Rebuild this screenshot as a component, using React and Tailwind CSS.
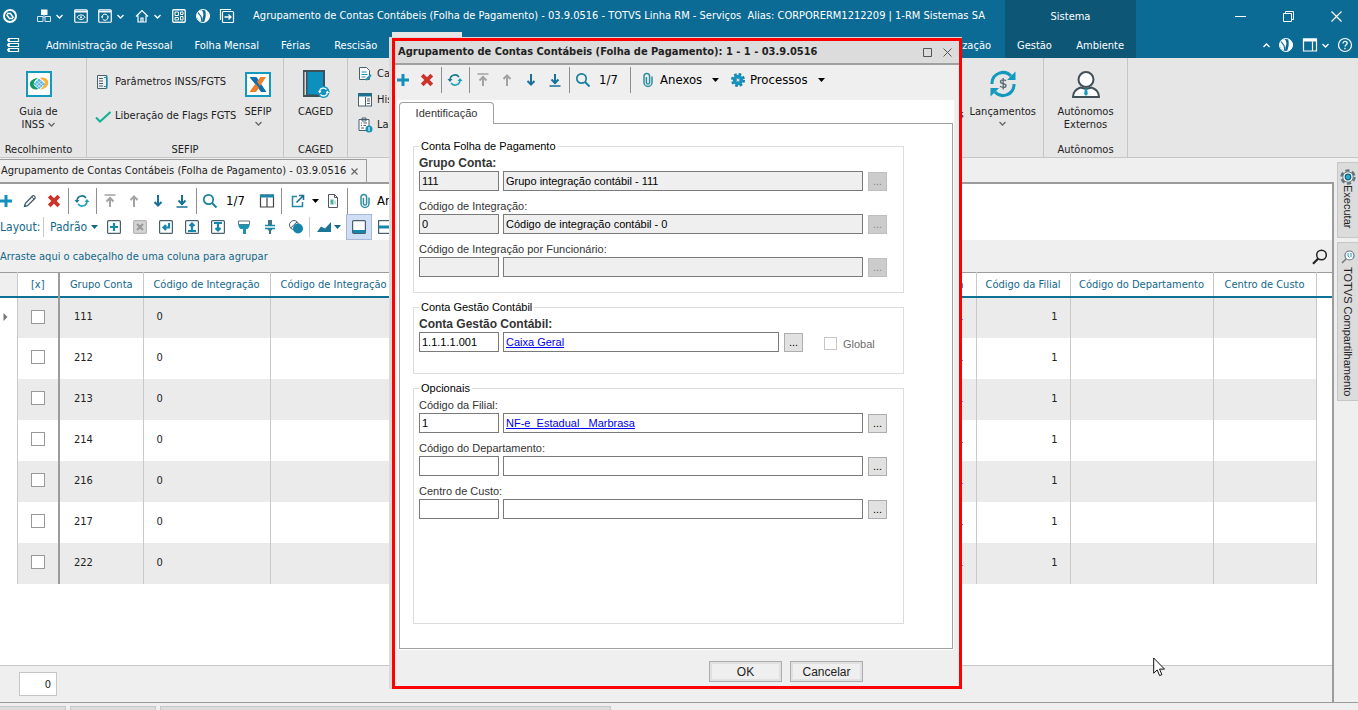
import { useState } from "react";

const TAHOMA = "font-['DejaVu_Sans_Condensed','DejaVu_Sans',sans-serif]";
const ARIAL = "font-['Liberation_Sans',Arial,sans-serif]";

// ---------- icons ----------
const Svg = ({ size = 16, children, className = "" }) => (
  <svg width={size} height={size} viewBox="0 0 16 16" fill="none" className={`shrink-0 ${className}`} aria-hidden="true">
    {children}
  </svg>
);

const Chevron = ({ up = false }) => (
  <svg width="7" height="5" viewBox="0 0 7 5" fill="none" className="shrink-0" aria-hidden="true">
    <path d={up ? "M.5 4 3.5 1l3 3" : "M.5 1l3 3 3-3"} stroke="currentColor" strokeWidth="1.3" />
  </svg>
);

const Caret = () => (
  <svg width="7" height="4" viewBox="0 0 7 4" className="shrink-0" aria-hidden="true">
    <path d="M0 0h7L3.500 4z" fill="currentColor" />
  </svg>
);

const TotvsIcon = () => (
  <Svg>
    <circle cx="8" cy="8" r="6" stroke="#fff" strokeWidth="2" />
    <path d="M5 5.500h3.500l3 4.500M4.500 6.500l3 4h3.500" stroke="#fff" strokeWidth="1.500" />
  </Svg>
);

const BoxesIcon = () => (
  <Svg>
    <path d="M5 1.500h6.500V7H5z" fill="#fff" />
    <path d="M1.500 8.500H7v5H1.500zM9 8.500h5.500v5H9zM8 6v4" stroke="#d6e6ee" />
  </Svg>
);

const WindowFrame = ({ children }) => (
  <Svg>
    <rect x="1.750" y="1.750" width="12.500" height="12.500" rx="1" stroke="#fff" strokeWidth="1.200" />
    <path d="M2 3.500h12" stroke="#fff" strokeWidth="2" />
    {children}
  </Svg>
);

const HomeIcon = () => (
  <Svg>
    <path d="M2 8.500 8 2.500l6 6M4 7.500V14h8V7.500M7 14v-4h2v4" stroke="#fff" strokeWidth="1.200" />
  </Svg>
);

const GridIcon = () => (
  <Svg>
    <rect x="1.750" y="1.750" width="12.500" height="12.500" rx="1" stroke="#fff" strokeWidth="1.300" />
    <path d="M4 4h3.500v3.500H4zM9.500 4h2.500v2.500H9.500zM4 9.500h3.500V12H4zM9.500 8.500H12V12H9.500z" stroke="#fff" />
  </Svg>
);

const GlobeIcon = () => (
  <Svg>
    <circle cx="8" cy="8" r="6.500" stroke="#fff" />
    <path d="M2.500 4.500C4 2.500 6 2 7 2.500c1.500 2 2 4.500.5 7.500L7 14C2.500 13 .8 8 2.500 4.500z" fill="#fff" />
    <path d="M10 2c4 1 5.500 5 4 8.500-1 2.500-3 3.500-5 3.800 1.500-3.300 2.500-8.300 1-12.300z" fill="#fff" />
    <path d="M3 4.500 6 8.500 7 14" stroke="#0c6b94" strokeWidth="1.200" />
  </Svg>
);

const ExitIcon = () => (
  <Svg>
    <path d="M1.500 12V1.500H12" stroke="#fff" strokeWidth="1.200" />
    <rect x="3.500" y="3.500" width="11" height="11" rx="1" stroke="#fff" strokeWidth="1.200" />
    <path d="M5.500 9h6M9.500 6.500 12 9l-2.500 2.500" stroke="#fff" strokeWidth="1.300" />
  </Svg>
);

const MenuIcon = () => (
  <Svg>
    <path d="M3.500 1.500h10v3h-10zM3.500 6.500h10v3h-10zM3.500 11.500h10v3h-10z" stroke="#fff" strokeWidth="1.200" />
    <path d="M2 3h3M2 8h3M2 13h3" stroke="#fff" strokeWidth="1.500" />
  </Svg>
);

const PlusIcon = () => (
  <Svg><path d="M8 2v12M2 8h12" stroke="#1590bb" strokeWidth="3" /></Svg>
);

const PencilIcon = () => (
  <Svg>
    <path d="M2.500 13.500 3.300 10.500 10.500 3c1-1.200 3.500.8 2.500 2.300L5.500 12.700z" stroke="#3f5661" strokeWidth="1.200" />
    <path d="M9.800 4 12 6.200" stroke="#3f5661" />
    <path d="M2 14l.6-2.500L4.500 13.400z" fill="#17607f" />
  </Svg>
);

const DeleteIcon = () => (
  <Svg><path d="M3.200 3.200l9.600 9.600M12.800 3.200l-9.600 9.600" stroke="#cc3329" strokeWidth="3.800" /></Svg>
);

const RefreshIcon = () => (
  <Svg>
    <path d="M3 8a5 5 0 0 1 9-3" stroke="#17788f" strokeWidth="1.600" />
    <path d="M13 8a5 5 0 0 1-9 3" stroke="#1aa0bd" strokeWidth="1.600" />
    <path d="M.5 7h5L3 10z" fill="#17788f" />
    <path d="M10.500 9h5L13 6z" fill="#1aa0bd" />
  </Svg>
);

const ArrowIcon = ({ down = false, bar = false, color }) => (
  <Svg>
    <g transform={down ? "rotate(180 8 8)" : undefined} stroke={color} strokeWidth="2">
      <path d={bar ? "M8 4v10M4.500 8.500 8 5 11.500 8.500" : "M8 3v11M4.500 7 8 3.500 11.500 7"} />
      {bar && <path d="M2.500 2h11" strokeWidth="1.500" />}
    </g>
  </Svg>
);

const SearchIcon = () => (
  <Svg>
    <circle cx="6.500" cy="6.500" r="4.700" stroke="#17809f" strokeWidth="1.700" />
    <path d="m10 10 4.500 4.500" stroke="#17809f" strokeWidth="2" />
  </Svg>
);

const ColumnsIcon = () => (
  <Svg>
    <path d="M1.500 2h13v12h-13zM8 4.500V14" stroke="#444" strokeWidth="1.200" />
    <path d="M1 1.500h14v3H1z" fill="#1a86aa" />
  </Svg>
);

const ExportIcon = () => (
  <Svg>
    <path d="M7 3.500H2.500v10h10V9" stroke="#2189a3" strokeWidth="1.500" />
    <path d="M6.500 9.500 13 3M9 2.500h4.500V7" stroke="#1a6f92" strokeWidth="1.600" />
  </Svg>
);

const DocIcon = () => (
  <Svg>
    <path d="M3.500 1.500h6l3 3v10h-9z" stroke="#556" />
    <path d="M5.500 6.500h3v5h-3z" fill="#4fae9b" />
    <path d="M8.500 7.500H11v4H8.500z" fill="#bfe0d8" />
    <path d="M9.500 1.500v3h3" stroke="#556" />
  </Svg>
);

const ClipIcon = () => (
  <Svg>
    <path d="M12 4.500v6a4 4 0 0 1-8 0V4.300a2.800 2.800 0 0 1 5.600 0v6.200a1.600 1.600 0 0 1-3.200 0V5" stroke="#2f8fa0" strokeWidth="1.500" />
  </Svg>
);

const GearIcon = () => (
  <Svg>
    <circle cx="8" cy="8" r="5.800" stroke="#1780a8" strokeWidth="2.400" strokeDasharray="2.600 1.950" />
    <circle cx="8" cy="8" r="3.600" stroke="#1193c4" strokeWidth="3.200" />
    <circle cx="8" cy="8" r="1.600" fill="#eaf4f8" stroke="#11607f" strokeWidth=".6" />
  </Svg>
);

const FrameIcon = ({ d, off = false }) => (
  <Svg>
    <rect x="1.600" y="1.600" width="12.800" height="12.800" rx="1" fill={off ? "#d5d5d5" : "#fff"} stroke={off ? "#b5b5b5" : "#49606c"} strokeWidth="1.200" />
    <path d={d} stroke={off ? "#999" : "#1487ac"} strokeWidth="2.200" />
  </Svg>
);

const PaintIcon = () => (
  <Svg>
    <path d="M2.500 2h11v3.500h-11z" fill="none" stroke="#62767e" />
    <path d="M2.500 5.500h11v2l-2 2.500H10v5H7v-5H4.500l-2-2.500z" fill="#1b93b5" />
  </Svg>
);

const PinIcon = () => (
  <Svg>
    <path d="M6 1h4v5H6zM5.500 10h5L9 12v3H7v-3z" fill="#3f7484" />
    <path d="M3 6.500h10M3 9.500h10" stroke="#1487ac" strokeWidth="1.400" />
  </Svg>
);

const CirclesIcon = () => (
  <Svg>
    <circle cx="6" cy="6" r="4.500" stroke="#49606c" />
    <circle cx="10" cy="9.500" r="5" fill="#1584a8" />
    <path d="M2.500 9 9 3" stroke="#49606c" />
  </Svg>
);

const ChartIcon = () => (
  <Svg><path d="M1 13 5 7.500l4 2L15 3v10z" fill="#1a7696" /></Svg>
);

const PanelIcon = () => (
  <Svg>
    <rect x="1.600" y="1.600" width="12.800" height="12.800" rx="1" fill="#fff" stroke="#49606c" strokeWidth="1.200" />
    <path d="M2 11h12v3H2z" fill="#1487ac" />
  </Svg>
);

const SplitIcon = () => (
  <Svg>
    <rect x="1.600" y="1.600" width="12.800" height="12.800" stroke="#49606c" strokeWidth="1.200" />
    <path d="M2 6.500h12v3H2z" fill="#1487ac" />
  </Svg>
);

const ListDocIcon = () => (
  <Svg>
    <path d="M2.500 1.500h9v13h-9z" fill="#eee" stroke="#49606c" />
    <path d="M4 4.500h4M4 7h4M4 9.500h4M4 12h4" stroke="#49606c" />
    <path d="M9 3.500h3v9H9M12 1.500v13" stroke="#1b93b5" />
  </Svg>
);

const CheckIcon = () => (
  <Svg><path d="M1 9.500 5 13.500l10.500-9.500" stroke="#13b295" strokeWidth="2" /></Svg>
);

const NoteIcon = () => (
  <Svg>
    <path d="M2.500 1.500h7l3 3v9h-10z" fill="#fff" stroke="#49606c" />
    <path d="M4.500 6h5M4.500 8.500h6M4.500 11h4" stroke="#1b93b5" />
    <path d="M9 14l5-5" stroke="#1b93b5" strokeWidth="2" />
  </Svg>
);

const HistoryIcon = () => (
  <Svg>
    <rect x="1.500" y="1.500" width="13" height="12.500" fill="#fff" stroke="#49606c" />
    <path d="M1 1.500h14v3H1z" fill="#1b7390" />
    <path d="M8.500 5v9M10 7h3M10 9h3M10 11.500h3" stroke="#49606c" />
  </Svg>
);

const ClipboardIcon = () => (
  <Svg>
    <path d="M2 2.500h10v11H2z" fill="#fff" stroke="#49606c" />
    <path d="M5 1h4v3H5zM4 6h1M6.500 6H10M4 8.500h1M6.500 8.500H9M4 11h3" stroke="#49606c" />
    <circle cx="12" cy="12" r="3.500" fill="#1593bb" />
    <path d="M12 10v4" stroke="#fff" />
  </Svg>
);

const BigIcon = ({ children }) => (
  <svg width="28" height="28" viewBox="0 0 28 28" fill="none" aria-hidden="true">{children}</svg>
);

const GuiaIcon = () => (
  <BigIcon>
    <rect x="2" y="2" width="24" height="24" fill="#fff" stroke="#1199be" strokeWidth="2" />
    <path d="M13 8C7 8.500 3.500 12 5.500 16.500 7 19.500 11 20 13.500 19L9 15.500c-1-2.500 1-5.500 4-7.500z" fill="#0c9a67" />
    <path d="M15 19.500c6-.5 9.500-4.500 8-8.500-1.500-3.500-6-4-8-3l4.500 3.500c1 2.500-1.500 6-4.500 8z" fill="#f8b13c" />
    <path d="M14 8.500 20 14l-5.500 5L8.500 14z" fill="#5db5e0" />
    <path d="m12 10.500 6 5.500M10 12.500l6 5M16.500 10.500l-6 5.500M18.500 12.500l-6 5" stroke="#e8f4fa" strokeWidth=".7" />
  </BigIcon>
);

const SefipIcon = () => (
  <BigIcon>
    <rect x="2" y="3" width="24" height="23" fill="#fff" stroke="#1199be" strokeWidth="2" />
    <path d="M5.500 7h7L22.500 22H17l-4-5.500z" fill="#0f70ad" />
    <path d="M22 7h-5.500L13 11.500l3 4.500zM5.500 22H12l3-4-3.500-4.500z" fill="#ef7f29" />
  </BigIcon>
);

const CagedIcon = () => (
  <BigIcon>
    <path d="M1 0h22v27H1z" fill="#414f57" />
    <path d="M5.500 2H21v22.500H5.500z" fill="#0d8fc0" />
    <path d="M2.500 2H4v23H2.500z" fill="#dadada" />
    <circle cx="21.500" cy="22" r="6" fill="#1193bd" />
    <path d="M17.500 21.500a4 4 0 0 1 7-2M25.500 22.500a4 4 0 0 1-7 2" stroke="#fff" strokeWidth="1.300" />
    <path d="M16 21h3.500l-1.800 2.500zM23.700 23h3.500l-1.800-2.500z" fill="#fff" />
  </BigIcon>
);

const MoneyIcon = () => (
  <BigIcon>
    <path d="M3 14v-1.500A11 11 0 0 1 22 6" stroke="#1199be" strokeWidth="3" />
    <path d="M25 14v1.500A11 11 0 0 1 6 22" stroke="#1199be" strokeWidth="3" />
    <path d="M26.500 1.500V10H18zM1.500 26.500V18H10z" fill="#1199be" />
    <path d="M17 11c-1-1.500-5.500-1.500-5.500.7 0 2.800 5.500 1.300 5.500 4 0 2.200-4.500 2.300-6 .5M14.200 8v11.500" stroke="#5a6a72" strokeWidth="1.300" />
  </BigIcon>
);

const PersonIcon = () => (
  <BigIcon>
    <path d="M1 27c0-5 3-8 7.500-9.500L14 19l5.500-1.500C24 19 27 22 27 27z" fill="#fff" stroke="#414f57" strokeWidth="2" />
    <circle cx="14" cy="9.500" r="7.500" fill="#fff" stroke="#414f57" strokeWidth="2" />
    <path d="M13 18.500h2l.8 5.500L14 26l-1.800-2z" fill="#1199be" />
  </BigIcon>
);

// ---------- small pieces ----------
const Sep = () => (
  <span className="flex justify-center w-1 h-[26px] shrink-0">
    <span className="w-px bg-[#8f8f8f]" />
  </span>
);

const ToolButton = ({ label, children }) => (
  <button type="button" aria-label={label} className="flex items-center justify-center w-6 h-6 shrink-0">
    {children}
  </button>
);

const RecordNav = () => (
  <>
    <ToolButton label="Atualizar"><RefreshIcon /></ToolButton>
    <Sep />
    <ToolButton label="Primeiro"><ArrowIcon bar color="#a3a3a3" /></ToolButton>
    <ToolButton label="Anterior"><ArrowIcon color="#a3a3a3" /></ToolButton>
    <ToolButton label="Próximo"><ArrowIcon down color="#17729a" /></ToolButton>
    <ToolButton label="Último"><ArrowIcon down bar color="#17729a" /></ToolButton>
    <Sep />
    <ToolButton label="Pesquisar"><SearchIcon /></ToolButton>
    <span className="w-[33px] pl-1 text-[13px] text-black">1/7</span>
  </>
);

const LAYOUT_TOOLS = [
  { label: "Novo layout", icon: <FrameIcon d="M8 4v8M4 8h8" /> },
  { label: "Excluir layout", icon: <FrameIcon off d="M5 5l6 6M11 5l-6 6" /> },
  { label: "Restaurar layout", icon: <FrameIcon d="M11 4v4.500H6M8 6 5.500 8.500 8 11" /> },
  { label: "Exportar layout", icon: <FrameIcon d="M4 12h8M8 11V5M5.500 7 8 4.500 10.500 7" /> },
  { label: "Importar layout", icon: <FrameIcon d="M4 4h8M8 4v7M5.500 9 8 11.500 10.500 9" /> },
  { label: "Formatar", icon: <PaintIcon /> },
  { label: "Fixar", icon: <PinIcon /> },
  { label: "Comparar", icon: <CirclesIcon /> },
];

const ROWS = ["111", "212", "213", "214", "216", "217", "222"];

// ---------- top bar ----------
const Header = () => (
  <header className="flex h-[58px] shrink-0 bg-[#0c6b94] text-white text-[11px]">
    <div className="flex flex-col flex-1 min-w-0">
      <div className="flex items-center h-8">
        <div className="flex items-center shrink-0 w-[233px] pl-[2px]">
          <TotvsIcon />
          <span className="w-px h-[22px] ml-[10px] mr-2 bg-[#8db9cd]" />
          <button type="button" aria-label="Módulos" className="flex items-center gap-1"><BoxesIcon /><Chevron /></button>
          <button type="button" aria-label="Visualizar" className="ml-[10px]">
            <WindowFrame>
              <path d="M4 9.200c2-3 6-3 8 0-2 3-6 3-8 0z" stroke="#fff" /><circle cx="8" cy="9.200" r="1" fill="#fff" />
            </WindowFrame>
          </button>
          <button type="button" aria-label="Atualizar" className="flex items-center gap-1 ml-2">
            <WindowFrame>
              <path d="M5 9a3 3 0 0 1 5.500-1.500M11 9.500A3 3 0 0 1 5.500 11" stroke="#fff" />
              <path d="M4 8.500h2.500L5 10.500zM9.500 9.500H12L11 7.500z" fill="#fff" />
            </WindowFrame>
            <Chevron />
          </button>
          <button type="button" aria-label="Início" className="flex items-center gap-1 ml-[10px]"><HomeIcon /><Chevron /></button>
          <span className="flex gap-2 ml-[10px]">
            <GridIcon />
            <GlobeIcon />
            <ExitIcon />
          </span>
        </div>
        <h1 className="flex-1 pt-px text-center whitespace-pre">
          {"Agrupamento de Contas Contábeis (Folha de Pagamento) - 03.9.0516 - TOTVS Linha RM - Serviços  Alias: CORPORERM1212209 | 1-RM Sistemas SA"}
        </h1>
      </div>
      <nav className="flex flex-1 leading-7 whitespace-nowrap overflow-hidden">
        <button type="button" aria-label="Menu" className="flex items-center w-[34px] pl-[5px]"><MenuIcon /></button>
        <a href="#administracao" className="px-3">Administração de Pessoal</a>
        <a href="#folha" className="pr-3 pl-[10px]">Folha Mensal</a>
        <a href="#ferias" className="pr-3 pl-[10px]">Férias</a>
        <a href="#rescisao" className="pr-[15px] pl-3">Rescisão</a>
        <a href="#encargos" aria-label="Encargos" className="w-[70px] bg-[#e6e6e6]" />
        <a href="#customizacao" className="ml-auto px-[14px]">Customização</a>
      </nav>
    </div>
    <div className="w-[131px] shrink-0 bg-[#0d5676] text-center">
      <div className="h-8 leading-[34px]">Sistema</div>
      <nav className="flex justify-between px-3 leading-7">
        <a href="#gestao">Gestão</a>
        <a href="#ambiente">Ambiente</a>
      </nav>
    </div>
    <div className="flex flex-col items-end w-[222px] shrink-0">
      <div className="flex items-center gap-[37px] h-8 pr-4">
        <button type="button" aria-label="Minimizar">
          <svg width="11" height="11" viewBox="0 0 11 11"><path d="M0 5.500h11" stroke="#fff" /></svg>
        </button>
        <button type="button" aria-label="Restaurar">
          <svg width="11" height="11" viewBox="0 0 11 11" fill="none"><path d="M.5 2.500h8v8h-8zM2.500 2.500v-2h8v8h-2" stroke="#fff" /></svg>
        </button>
        <button type="button" aria-label="Fechar">
          <svg width="11" height="11" viewBox="0 0 11 11"><path d="M.5.5l10 10M10.500.5l-10 10" stroke="#fff" strokeWidth="1.200" /></svg>
        </button>
      </div>
      <div className="flex items-center flex-1 gap-2 pr-[5px]">
        <Chevron up />
        <GlobeIcon />
        <span className="flex items-center gap-1">
          <Svg>
            <path d="M1.500 2h13v12h-13zM10.500 4.500V14" stroke="#fff" strokeWidth="1.200" />
            <path d="M1 1.500h14v3H1z" fill="#fff" />
          </Svg>
          <Chevron />
        </span>
        <Svg>
          <circle cx="8" cy="8" r="6.500" stroke="#fff" strokeWidth="1.200" />
          <path d="M6 6.500c0-3 4.200-2.500 4.200-.3C10.200 7.800 8 8 8 9.500M8 10.800v1.500" stroke="#fff" strokeWidth="1.300" />
        </Svg>
      </div>
    </div>
  </header>
);

const RibbonGroup = ({ title, className, children }) => (
  <section className={`flex flex-col shrink-0 border-r border-[#c6c6c6] ${className}`}>
    <div className="flex flex-1">{children}</div>
    <h2 className="h-4 leading-[18px] text-center">{title}</h2>
  </section>
);

const BigButton = ({ icon, children, className = "" }) => (
  <button type="button" className={`flex flex-col items-center pt-3 leading-[13px] text-center ${className}`}>
    {icon}
    <span className="mt-[7px]">{children}</span>
  </button>
);

const SmallButton = ({ icon, children }) => (
  <button type="button" className="flex items-center gap-1 whitespace-nowrap">{icon}{children}</button>
);

const DropMark = () => (
  <span className="flex justify-center pt-[3px] text-[#666]"><Chevron /></span>
);

const Ribbon = () => (
  <div className="flex h-[100px] shrink-0 overflow-hidden bg-[#e6e6e6] border-b border-[#c6c6c6] text-[11px] text-[#222]">
    <RibbonGroup title="Recolhimento" className="w-[87px] pr-[9px]">
      <BigButton icon={<GuiaIcon />} className="w-full">
        Guia de<br />
        <span className="inline-flex items-center gap-1">INSS <span className="text-[#666]"><Chevron /></span></span>
      </BigButton>
    </RibbonGroup>
    <RibbonGroup title="SEFIP" className="w-[197px]">
      <div className="flex flex-col gap-[17px] pt-4 pl-2 w-[149px]">
        <SmallButton icon={<ListDocIcon />}>Parâmetros INSS/FGTS</SmallButton>
        <SmallButton icon={<CheckIcon />}>Liberação de Flags FGTS</SmallButton>
      </div>
      <BigButton icon={<SefipIcon />} className="w-11">SEFIP<DropMark /></BigButton>
    </RibbonGroup>
    <RibbonGroup title="CAGED" className="w-16">
      <BigButton icon={<CagedIcon />} className="w-full">CAGED</BigButton>
    </RibbonGroup>
    <RibbonGroup title="" className="w-[696px]">
      <div className="flex flex-col gap-[9px] pt-2 pl-[9px]">
        <SmallButton icon={<NoteIcon />}>Cadastro</SmallButton>
        <SmallButton icon={<HistoryIcon />}>Histórico</SmallButton>
        <SmallButton icon={<ClipboardIcon />}>Lançamento</SmallButton>
      </div>
      <div className="flex ml-auto pr-[7px]">
        <span className="pt-[50px] pr-[6px] leading-[13px]">Eventos</span>
        <BigButton icon={<MoneyIcon />}>Lançamentos<DropMark /></BigButton>
      </div>
    </RibbonGroup>
    <RibbonGroup title="Autônomos" className="w-[84px]">
      <BigButton icon={<PersonIcon />} className="w-full">Autônomos<br />Externos</BigButton>
    </RibbonGroup>
  </div>
);

// ---------- grid ----------
const GridToolbar = () => (
  <div className="flex flex-col shrink-0 overflow-hidden h-14 bg-white pt-[3px] whitespace-nowrap">
    <div className="flex items-center h-[27px] -ml-[6px]">
      <ToolButton label="Incluir"><PlusIcon /></ToolButton>
      <ToolButton label="Editar"><PencilIcon /></ToolButton>
      <ToolButton label="Excluir"><DeleteIcon /></ToolButton>
      <Sep />
      <RecordNav />
      <ToolButton label="Colunas"><ColumnsIcon /></ToolButton>
      <Sep />
      <button type="button" aria-label="Exportar" className="flex items-center gap-[6px] w-[38px] pl-[7px]"><ExportIcon /><Caret /></button>
      <ToolButton label="Relatório"><DocIcon /></ToolButton>
      <Sep />
      <button type="button" className="flex items-center gap-1 pl-2 text-[13px] text-black"><ClipIcon />Anexos</button>
    </div>
    <div className="flex items-center h-[26px] text-[12px] text-[#12678a]">
      <span className="w-[43px]">Layout:</span>
      <span className="w-px h-5 bg-[#c9c9c9]" />
      <button type="button" className="flex items-center gap-1 w-[57px] pl-[6px]">Padrão<Caret /></button>
      {LAYOUT_TOOLS.map((tool) => (
        <button type="button" key={tool.label} aria-label={tool.label} className="flex items-center justify-center w-[26px]">
          {tool.icon}
        </button>
      ))}
      <span className="w-px h-5 bg-[#c9c9c9]" />
      <button type="button" aria-label="Gráfico" className="flex items-center gap-[2px] w-9 pl-[6px]"><ChartIcon /><Caret /></button>
      <button type="button" aria-label="Painel" className="flex items-center justify-center w-[26px] h-full border border-[#a6b9d6] bg-[#cfdef5]">
        <PanelIcon />
      </button>
      <button type="button" aria-label="Dividir" className="flex items-center justify-center w-[26px]"><SplitIcon /></button>
    </div>
  </div>
);

const DataGrid = () => (
  <div className="flex-1 min-h-0 overflow-hidden bg-white">
    <table className="w-full table-fixed border-collapse text-[11px] text-[#222]">
      <colgroup>
        <col className="w-[17px]" />
        <col className="w-[42px]" />
        <col className="w-[84px]" />
        <col className="w-[127px]" />
        <col className="w-[240px]" />
        <col />
        <col className="w-[94px]" />
        <col className="w-[143px]" />
        <col className="w-[103px]" />
        <col className="w-4" />
      </colgroup>
      <thead>
        <tr className="h-6 border-t border-t-[#9c9c9c] border-b-2 border-b-[#0f7196] text-[#12678a] whitespace-nowrap [&>th]:pt-[2px] [&>th]:font-normal [&>th]:border-r [&>th]:border-r-[#c9c9c9]">
          <th className="bg-[#efefef]" aria-label="Indicador" />
          <th className="border-r-2! border-r-[#9c9c9c]!">[x]</th>
          <th>Grupo Conta</th>
          <th>Código de Integração</th>
          <th className="text-left pl-[10px]">Código de Integração por Funcionário</th>
          <th className="text-right pr-3">Conta</th>
          <th>Código da Filial</th>
          <th>Código do Departamento</th>
          <th>Centro de Custo</th>
          <th className="border-r-0!" aria-label="Vazio" />
        </tr>
      </thead>
      <tbody>
        {ROWS.map((code, i) => (
          <tr key={code} className="h-[41px] odd:bg-[#ebebeb] [&>td]:border-r [&>td]:border-r-[#c9c9c9]">
            <td className="bg-white pb-[2px]">
              {i === 0 && (
                <svg width="5" height="8" viewBox="0 0 5 8" className="ml-[3px]"><path d="M.5 0v8l4-4z" fill="#777" /></svg>
              )}
            </td>
            <td className="pb-[2px] border-r-2! border-r-[#9c9c9c]!">
              <input type="checkbox" aria-label={`Selecionar ${code}`} className="block appearance-none mx-auto size-[14px] border border-[#999] bg-white" />
            </td>
            <td className="pl-[14px]">{code}</td>
            <td className="pl-[13px]">0</td>
            <td />
            <td className="text-right pr-3"><a href="#conta" className="text-[#1a78d0]">1</a></td>
            <td className="text-right pr-3">1</td>
            <td />
            <td />
            <td className="bg-white border-r-0!" />
          </tr>
        ))}
      </tbody>
    </table>
  </div>
);

const SideTabs = () => (
  <aside className={`flex flex-col gap-1 w-6 shrink-0 pt-1 pl-[3px] text-[11px] text-[#222] ${ARIAL}`}>
    <button type="button" className="flex flex-col items-center h-[76px] pt-[6px] border border-r-0 border-[#c6c6c6] bg-[#dcdcdc]">
      <Svg>
        <circle cx="8" cy="8" r="6.500" stroke="#62767e" strokeWidth="2.400" strokeDasharray="4.200 2.600" />
        <circle cx="8" cy="8" r="5.200" fill="#fff" stroke="#62767e" />
        <circle cx="8" cy="8" r="2.800" fill="#23aecb" stroke="#15607c" strokeWidth="1.200" />
      </Svg>
      <span className="[writing-mode:vertical-rl] leading-4">Executar</span>
    </button>
    <button type="button" className="flex flex-col items-center gap-[2px] h-[159px] pt-[6px] border border-r-0 border-[#c6c6c6] bg-[#dcdcdc]">
      <Svg>
        <circle cx="9.500" cy="6.500" r="4.500" fill="#fff" stroke="#62767e" strokeWidth="1.200" />
        <path d="M6 10 2 14" stroke="#62767e" strokeWidth="1.500" />
        <path d="M8 4v3l1.500 1.500M11 4v4" stroke="#1b93b5" />
      </Svg>
      <span className="[writing-mode:vertical-rl] leading-4 whitespace-nowrap">TOTVS Compartilhamento</span>
    </button>
  </aside>
);

// ---------- dialog ----------
const Field = ({ id, label, code = "", text = "", bold, disabled, link, narrow, children }) => (
  <div>
    <label htmlFor={id} className={`block leading-4 ${bold ? "font-bold text-[12px]" : ""}`}>{label}</label>
    <div className="flex items-end">
      <input
        id={id}
        defaultValue={code}
        readOnly={disabled}
        className={`w-20 h-5 mr-1 px-[2px] border border-[#7a7a7a] text-black ${disabled ? "bg-[#efefef]" : "bg-white"}`}
      />
      <input
        aria-label={`${label} descrição`}
        defaultValue={text}
        readOnly
        className={`${narrow ? "w-[276px]" : "w-[360px]"} h-5 mr-[5px] px-[2px] border border-[#7a7a7a] ${disabled ? "bg-[#efefef]" : "bg-white"} ${link ? "text-[#0000ee] underline" : "text-black"}`}
      />
      <button
        type="button"
        disabled={disabled}
        className={`size-[19px] border leading-[17px] ${disabled ? "bg-[#cccccc] border-[#bfbfbf] text-[#888]" : "bg-[#e1e1e1] border-[#adadad] text-black"}`}
      >
        ...
      </button>
      {children}
    </div>
  </div>
);

const Group = ({ title, className = "", children }) => (
  <fieldset className={`min-w-0 border border-[#dcdcdc] px-[5px] ${className}`}>
    <legend className="px-[2px] leading-[14px] text-black">{title}</legend>
    <div className="flex flex-col gap-[7px] pt-[2px]">{children}</div>
  </fieldset>
);

const Dialog = () => {
  const [global, setGlobal] = useState(false);

  return (
    <div role="dialog" aria-label="Agrupamento de Contas Contábeis" className="absolute left-[389px] top-[37px] pl-[3px] pt-px bg-[#dadada]">
      <div className="flex flex-col w-[570px] h-[651px] border-3 border-[#ff0000] bg-[#efefef]">
        <div className="flex items-center h-6 shrink-0 pl-[3px] pr-[7px] bg-[#dcdcdc] border-b-2 border-[#a0a0a0]">
          <h2 className="flex-1 text-[11px] font-bold text-[#222] whitespace-nowrap">
            Agrupamento de Contas Contábeis (Folha de Pagamento): 1 - 1 - 03.9.0516
          </h2>
          <button type="button" aria-label="Maximizar">
            <svg width="9" height="9" viewBox="0 0 9 9" fill="none"><path d="M.5.5h8v8h-8z" stroke="#555" /></svg>
          </button>
          <button type="button" aria-label="Fechar" className="ml-[11px]">
            <svg width="9" height="9" viewBox="0 0 9 9"><path d="M.5.5l8 8M8.500.5l-8 8" stroke="#555" /></svg>
          </button>
        </div>
        <div className="flex items-center h-[35px] shrink-0 pb-[5px] overflow-hidden text-[13px] text-black">
          <span className="flex items-center -ml-1">
            <ToolButton label="Incluir"><PlusIcon /></ToolButton>
            <ToolButton label="Excluir"><DeleteIcon /></ToolButton>
            <Sep />
            <RecordNav />
          </span>
          <Sep />
          <button type="button" className="flex items-center pl-2">
            <ClipIcon /><span className="w-14 pl-1 text-left">Anexos</span><Caret />
          </button>
          <button type="button" className="flex items-center pl-[11px]">
            <GearIcon /><span className="w-[72px] pl-1 text-left">Processos</span><Caret />
          </button>
        </div>
        <div className={`flex flex-col flex-1 min-h-0 ml-[2px] mr-[5px] pt-[2px] pl-[2px] pr-px pb-px bg-white text-[11px] text-[#333] ${ARIAL}`}>
          <div className="flex h-[22px]">
            <button type="button" className="w-[95px] rounded-t border border-b-0 border-[#a0a0a0]">Identificação</button>
            <span className="flex-1 border-b border-[#a0a0a0]" />
          </div>
          <form className="flex flex-col flex-1 gap-[7px] pt-[15px] pb-6 pl-[13px] pr-12 border border-t-0 border-[#a0a0a0]">
            <Group title="Conta Folha de Pagamento" className="pb-[15px]">
              <Field id="grupo" label="Grupo Conta:" code="111" text="Grupo integração contábil - 111" bold disabled />
              <Field id="integracao" label="Código de Integração:" code="0" text="Código de integração contábil - 0" disabled />
              <Field id="funcionario" label="Código de Integração por Funcionário:" disabled />
            </Group>
            <Group title="Conta Gestão Contábil" className="pb-[21px]">
              <Field id="gestao" label="Conta Gestão Contábil:" code="1.1.1.1.001" text="Caixa Geral" bold link narrow>
                <label className="flex items-center gap-[6px] ml-[21px] text-[#6d6d6d]">
                  <input
                    type="checkbox"
                    checked={global}
                    onChange={(e) => setGlobal(e.target.checked)}
                    className="appearance-none size-[13px] border border-[#c6c6c6] bg-white checked:bg-[#1590bb]"
                  />
                  Global
                </label>
              </Field>
            </Group>
            <Group title="Opcionais" className="flex-1">
              <Field id="filial" label="Código da Filial:" code="1" text="NF-e  Estadual   Marbrasa" link />
              <Field id="departamento" label="Código do Departamento:" />
              <Field id="custo" label="Centro de Custo:" />
            </Group>
          </form>
        </div>
        <div className={`flex justify-end gap-2 h-9 shrink-0 pt-[11px] pr-24 text-[12px] text-[#222] ${ARIAL}`}>
          <button type="button" className="w-[73px] h-[21px] border border-[#adadad] bg-[#efefef] inset-ring-2 inset-ring-[#e1e1e1]">OK</button>
          <button type="button" className="w-[73px] h-[21px] border border-[#adadad] bg-[#efefef] inset-ring-2 inset-ring-[#e1e1e1]">Cancelar</button>
        </div>
      </div>
    </div>
  );
};

const App = () => (
  <div className={`relative flex flex-col h-screen overflow-hidden bg-[#efefef] ${TAHOMA}`}>
    <Header />
    <Ribbon />
    <div className="flex flex-1 min-h-0">
      <main className="flex flex-col flex-1 min-w-0">
        <div className="flex h-6 shrink-0 pt-px">
          <div className="flex items-center justify-between w-[367px] pl-px pr-2 border border-b-0 border-l-0 border-[#9c9c9c] text-[11px] text-[#222] whitespace-nowrap">
            Agrupamento de Contas Contábeis (Folha de Pagamento) - 03.9.0516
            <button type="button" aria-label="Fechar aba">
              <svg width="7" height="7" viewBox="0 0 7 7"><path d="M.5.5l6 6M6.500.5l-6 6" stroke="#666" strokeWidth="1.200" /></svg>
            </button>
          </div>
        </div>
        <div className="flex flex-col flex-1 min-h-0 border-t-2 border-r-2 border-[#9c9c9c]">
          <GridToolbar />
          <div className="flex items-center justify-between h-8 shrink-0 pt-[2px] pr-1 text-[11px] text-[#12678a]">
            Arraste aqui o cabeçalho de uma coluna para agrupar
            <button type="button" aria-label="Localizar">
              <Svg>
                <circle cx="9.500" cy="6" r="4.800" stroke="#222" strokeWidth="1.500" />
                <path d="M6.300 9.500 1 14.800" stroke="#222" strokeWidth="2.200" />
              </Svg>
            </button>
          </div>
          <DataGrid />
          <div className="h-[37px] shrink-0 pt-[6px] pl-[19px] border-t border-[#c6c6c6]">
            <input
              aria-label="Total de registros"
              defaultValue="0"
              readOnly
              className="block w-[38px] h-6 px-[5px] border border-[#c6c6c6] bg-white text-right text-[11px] text-[#222]"
            />
          </div>
        </div>
      </main>
      <SideTabs />
    </div>
    <footer className="flex items-end gap-1 h-2 shrink-0 border-t border-[#9c9c9c]">
      <span className="w-[66px] h-1 border-t border-r border-[#c6c6c6] bg-[#dcdcdc]" />
      <span className="w-[86px] h-1 border border-b-0 border-[#c6c6c6] bg-[#dcdcdc]" />
      <span className="w-[451px] h-1 border border-b-0 border-[#c6c6c6] bg-[#dcdcdc]" />
    </footer>
    <Dialog />
    <svg width="13" height="20" viewBox="0 0 13 20" className="absolute left-[1153px] top-[657px]" aria-hidden="true">
      <path d="M.7 1v15.200l3.500-3.300 2.400 5.700 2.300-1-2.400-5.500h5z" fill="#fff" stroke="#111" />
    </svg>
  </div>
);

export default App;
